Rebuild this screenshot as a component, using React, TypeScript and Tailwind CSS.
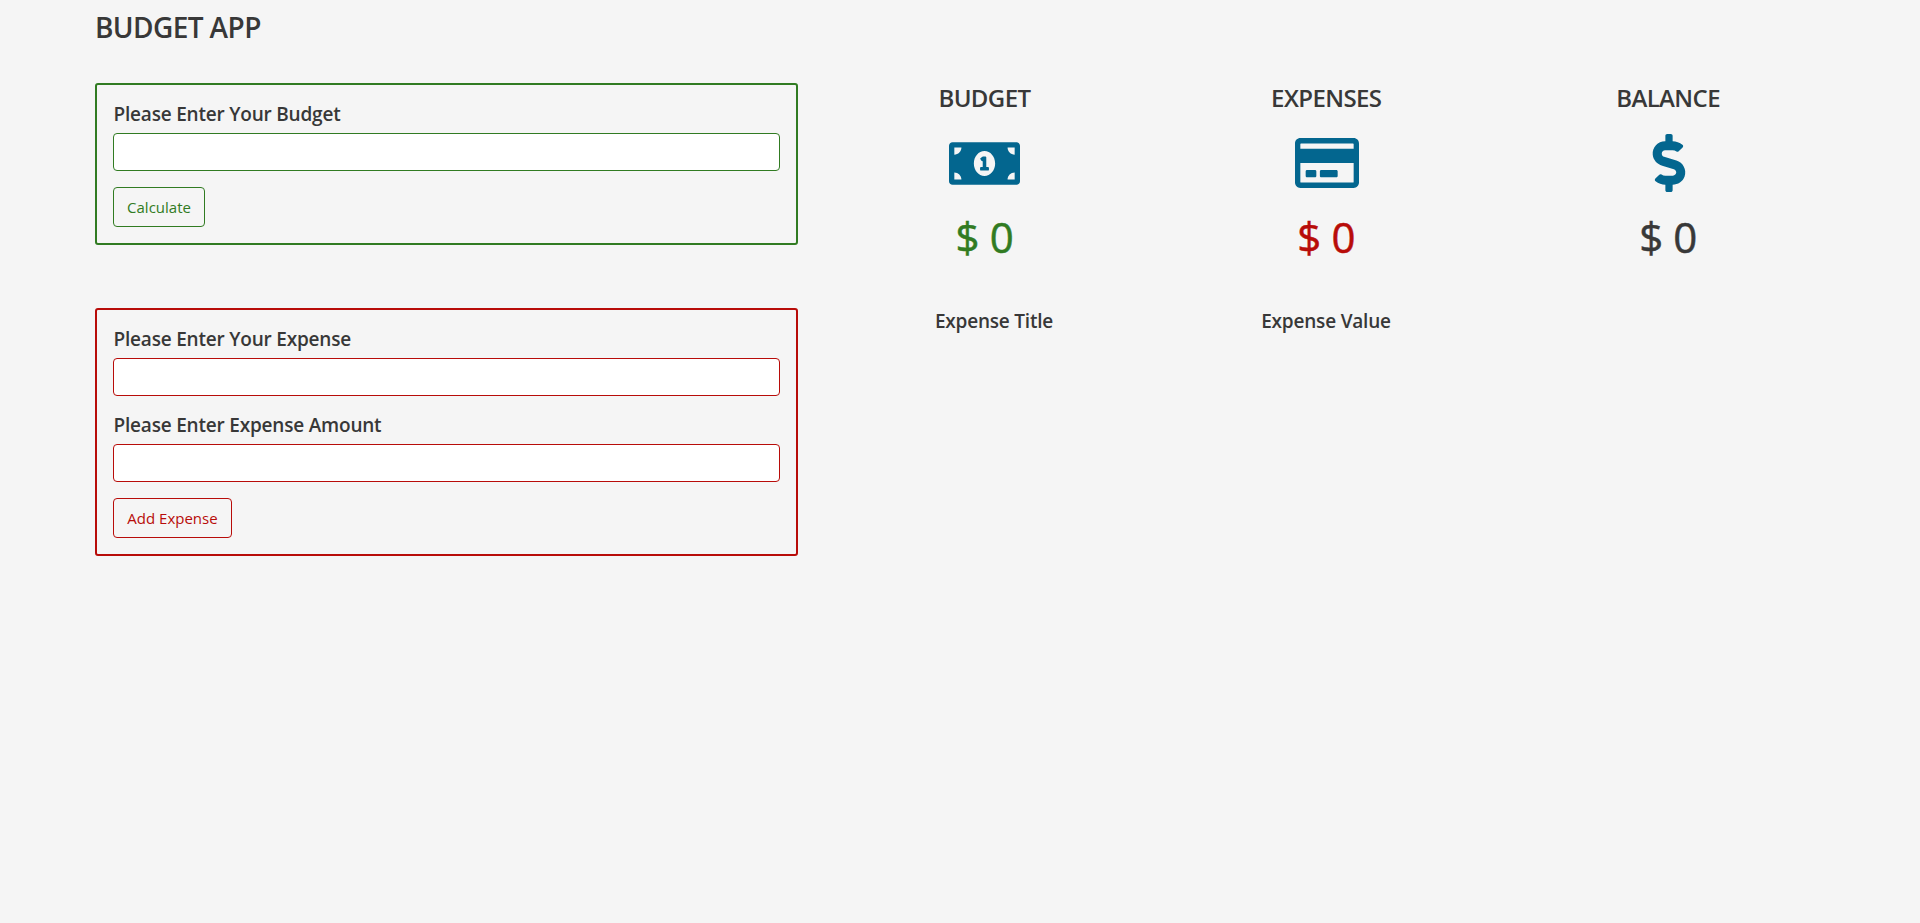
import { FaDollarSign, FaMoneyBillAlt, FaRegCreditCard } from 'react-icons/fa';

const labelClass = 'block h-[32px] pl-[0.5px] text-[19px] leading-[26px] font-semibold tracking-[-0.2px]';

function Stat({ title, icon, value, color }: { title: string; icon: React.ReactNode; value: string; color: string }) {
  return (
    <div className="flex w-1/3 flex-col items-center">
      <h4 className="h-[29px] text-[24px] leading-[29px] font-semibold tracking-[-0.6px] uppercase">{title}</h4>
      <div className="mt-[19px] flex h-[64px] items-center justify-center text-[#03668f]">{icon}</div>
      <h3 className={`mt-[17px] text-[42px] leading-[50px] tracking-[-0.4px] [-webkit-text-stroke:0.5px] ${color}`}>{value}</h3>
    </div>
  );
}

export default function App() {
  return (
    <div className='min-h-[923px] bg-[#f5f5f5] pl-[95px] font-["Open_Sans",sans-serif] text-[#383838]'>
      <h3 className="pt-[10px] text-[28px] leading-[34px] font-semibold tracking-[-0.6px] uppercase">Budget App</h3>

      <div className="mt-[39px] flex">
        <div className="flex w-[703px] flex-col gap-[63px]">
          {/* budget */}
          <form className="h-[162px] rounded-[3px] border-2 border-[#317b22] px-[16px] pt-[16px]">
            <label className={labelClass}>Please Enter Your Budget</label>
            <input className="block h-[38px] w-full rounded-[4px] border border-[#317b22] bg-white" />
            <button type="button" className="mt-[16px] h-[40px] w-[92px] rounded-[4px] border border-[#317b22] text-[15px] text-[#317b22]">Calculate</button>
          </form>

          {/* expense */}
          <form className="h-[248px] rounded-[3px] border-2 border-[#b80c09] px-[16px] pt-[16px]">
            <label className={labelClass}>Please Enter Your Expense</label>
            <input className="block h-[38px] w-full rounded-[4px] border border-[#b80c09] bg-white" />
            <label className={`mt-[16px] ${labelClass}`}>Please Enter Expense Amount</label>
            <input className="block h-[38px] w-full rounded-[4px] border border-[#b80c09] bg-white" />
            <button type="button" className="mt-[16px] h-[40px] w-[119px] rounded-[4px] border border-[#b80c09] text-[15px] text-[#b80c09]">Add Expense</button>
          </form>
        </div>

        {/* totals */}
        <div className="ml-[15.5px] w-[1025.5px]">
          <div className="flex">
            <Stat title="Budget" icon={<FaMoneyBillAlt className="text-[71px]" />} value="$ 0" color="text-[#317b22]" />
            <Stat title="Expenses" icon={<FaRegCreditCard className="ml-[1px] text-[64px]" />} value="$ 0" color="text-[#b80c09]" />
            <Stat title="Balance" icon={<FaDollarSign className="ml-[1px] text-[58px]" />} value="$ 0" color="text-[#383838]" />
          </div>
          <div className="mt-[47px] flex text-[19px] leading-[24px] font-semibold tracking-[-0.2px]">
            <h5 className="w-[361px] text-center">Expense Title</h5>
            <h5 className="w-[303px] text-center">Expense Value</h5>
          </div>
        </div>
      </div>
    </div>
  );
}
